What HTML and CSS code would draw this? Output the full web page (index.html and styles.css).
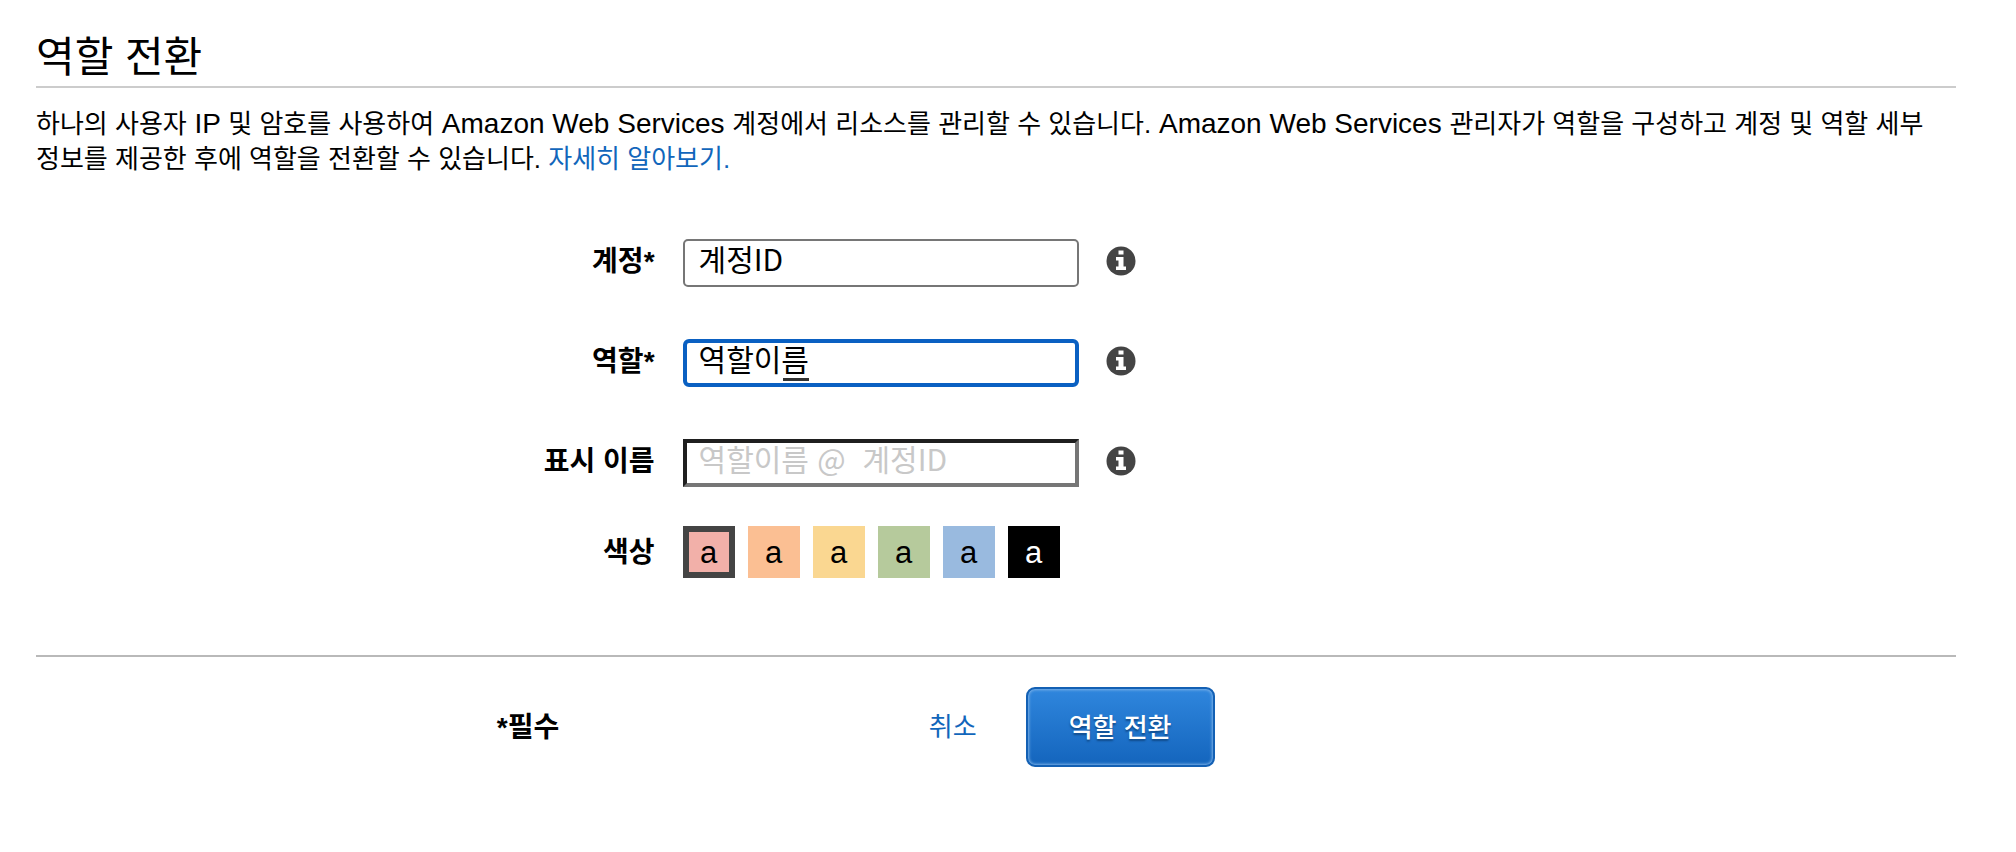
FILE: index.html
```html
<!DOCTYPE html>
<html lang="ko">
<head>
<meta charset="utf-8">
<meta name="viewport" content="width=device-width, initial-scale=1">
<title>역할 전환</title>
<link rel="stylesheet" href="styles.css">
</head>
<body>
<svg class="sprite" aria-hidden="true">
  <symbol id="info" viewBox="0 0 30 30">
    <circle cx="15" cy="15" r="14.5" fill="#444"/>
    <path d="M12.500 4.500h5v4h-5zM10 11h7.500v9.500H20V24H10v-3.500h2.500v-6H10z" fill="#fff"/>
  </symbol>
</svg>
<main class="page">
  <h1 class="title">역할 전환</h1>
  <p class="intro">하나의 사용자<span class="latin"> IP </span>및 암호를 사용하여<span class="latin"> Amazon Web Services </span>계정에서 리소스를 관리할 수 있습니다.<span class="latin"> Amazon Web Services </span>관리자가 역할을 구성하고 계정 및 역할 세부 정보를 제공한 후에 역할을 전환할 수 있습니다. <a class="link" href="#">자세히 알아보기.</a></p>
  <form>
    <div class="fields">
      <label class="label" for="account">계정*</label>
      <div class="control">
        <input class="input" id="account" type="text" value="계정ID">
        <button class="info" type="button" aria-label="계정 정보"><svg><use href="#info"/></svg></button>
      </div>
      <label class="label" for="role">역할*</label>
      <div class="control">
        <input class="input input-active" id="role" type="text" value="역할이름">
        <span class="composing"></span>
        <button class="info" type="button" aria-label="역할 정보"><svg><use href="#info"/></svg></button>
      </div>
      <label class="label" for="display">표시 이름</label>
      <div class="control control-last">
        <input class="input input-inset" id="display" type="text" placeholder="역할이름 @  계정ID">
        <button class="info" type="button" aria-label="표시 이름 정보"><svg><use href="#info"/></svg></button>
      </div>
      <span class="label label-center" id="color-label">색상</span>
      <div class="swatches" role="group" aria-labelledby="color-label">
        <button class="swatch red selected" type="button" aria-pressed="true">a</button>
        <button class="swatch orange" type="button">a</button>
        <button class="swatch yellow" type="button">a</button>
        <button class="swatch green" type="button">a</button>
        <button class="swatch blue" type="button">a</button>
        <button class="swatch black" type="button">a</button>
      </div>
    </div>
    <div class="footer">
      <span class="required">*필수</span>
      <div class="actions">
        <a class="link" href="#">취소</a>
        <button class="submit" type="submit">역할 전환</button>
      </div>
    </div>
  </form>
</main>
</body>
</html>
```

FILE: styles.css
```css
* { box-sizing: border-box; }

body {
  margin: 0;
  background: #fff;
  color: #000;
  font-family: "Liberation Sans", "Noto Sans CJK KR", sans-serif;
  font-size: 26px;
  line-height: 35px;
}

button, input { font-family: inherit; margin: 0; }

.sprite { display: none; }

.page { padding: 30px 60px 40px 36px; }

.title {
  margin: 0;
  border-bottom: 2px solid #ccc;
  font-size: 42px;
  font-weight: 400;
  line-height: 56px;
}

.intro { margin: 18px 0 0; word-break: keep-all; }

.latin { font-size: 28px; }

.link { color: #1166bb; text-decoration: none; }

.fields {
  display: grid;
  grid-template-columns: 17fr 35fr;
  column-gap: 28px;
  align-items: start;
  padding: 62px 0 77px;
  border-bottom: 2px solid #b9b9b9;
}

.label, .required {
  font-size: 28px;
  font-weight: 700;
}

.label { padding-top: 5px; text-align: right; }

.label-center { align-self: center; padding-top: 0; }

.control {
  position: relative;
  display: flex;
  align-items: center;
  gap: 27px;
  height: 48px;
  margin-bottom: 52px;
}

.control-last { margin-bottom: 39px; }

.input {
  width: 396px;
  height: 48px;
  padding: 0 14px 10px;
  border: 2px solid #767676;
  border-radius: 5px;
  outline: 0;
  background: #fff;
  color: #000;
  font-family: "Noto Sans CJK KR", sans-serif;
  font-size: 30px;
  line-height: 34px;
}

.input-active, .input-inset { padding: 0 12px 10px; line-height: 30px; }

.input-active {
  border: 4px solid #0a60c2;
  border-radius: 6px;
}

.input-inset {
  border: 4px solid;
  border-color: #1f1f1f #767676 #767676 #1f1f1f;
  border-radius: 0;
}

.input::placeholder { color: #c8c8c8; opacity: 1; }

.composing {
  position: absolute;
  left: 100px;
  top: 39px;
  width: 26px;
  height: 3px;
  background: #333;
}

.info {
  width: 30px;
  height: 30px;
  margin-top: -4px;
  padding: 0;
  border: 0;
  background: none;
}

.info svg { display: block; width: 30px; height: 30px; }

.swatches { display: flex; gap: 13px; }

.swatch {
  width: 52px;
  height: 52px;
  padding: 2px 0 0;
  border: 0;
  color: #000;
  font-size: 31px;
  line-height: 36px;
}

.selected { border: 6px solid #444; }
.red { background: #f2b0a9; }
.orange { background: #fbbf93; }
.yellow { background: #fad791; }
.green { background: #b6ca9c; }
.blue { background: #99badf; }
.black { background: #000; color: #fff; }

.footer {
  display: grid;
  grid-template-columns: 432px 1fr;
  align-items: center;
  padding: 30px 0 0 24%;
}

.actions { display: flex; align-items: center; gap: 49px; }

.submit {
  height: 80px;
  padding: 0 41px 4px;
  border: 2px solid #1360b4;
  border-radius: 9px;
  background: linear-gradient(#2f86dd, #1465bd);
  box-shadow: inset 0 0 3px 1px #7db2e8;
  color: #fff;
  font-size: 26px;
  font-weight: 500;
  text-shadow: 0 2px 2px #104a88;
}
```
